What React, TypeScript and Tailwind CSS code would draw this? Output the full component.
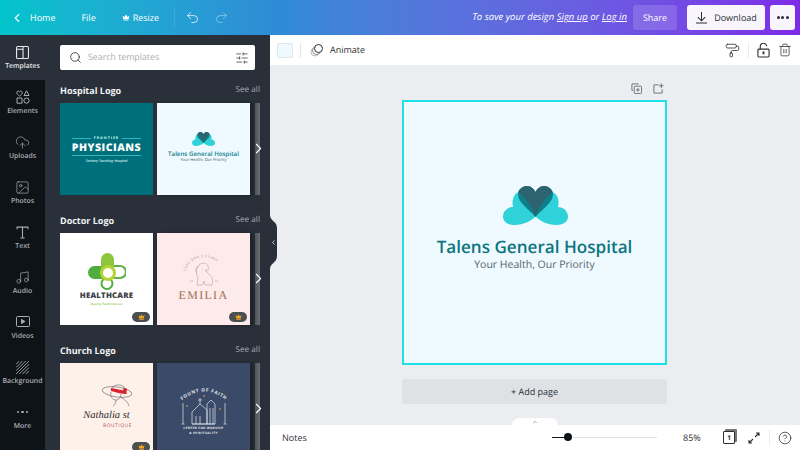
import React from "react";
import { ChevronLeft, ChevronRight, ChevronUp, Search, SlidersHorizontal, Undo2, Redo2, CloudUpload, Image, Music, Trash2, PaintRoller, CircleHelp } from "lucide-react";

const CrownGlyph = ({ className }: { className?: string }) => (
  <svg viewBox="0 0 12 10" className={className} fill="currentColor"><path d="M1 2.2l2.6 2L6 .6l2.4 3.6L11 2.2 10 7.6H2zM2.2 8.3h7.6v1.2H2.2z" /></svg>
);

const HeartLogo = ({ className }: { className?: string }) => (
  <svg viewBox="0 0 65 39" className={className}>
    <path fill="#2fd2d8" d="M32.5 30.5C28 35 20 39 12 39 5 39 0 36 0 30.500C0 25 5 21 10 21 8.500 14 11 6 18 5.500 25 5 32.500 20 32.500 30.500Z" />
    <path fill="#2fd2d8" d="M32.500 30.500C37 35 45 39 53 39 60 39 65 36 65 30.500C65 25 60 21 55 21 57 14 54 6 47 5.500 40 5 32.500 20 32.500 30.500Z" />
    <path fill="#0e7f8a" d="M32.500 31C25 22 15 17 15 8 15 3 20 0 24 0 28 0 31 3 32.500 6 34 3 37 0 41 0 45 0 50 3 50 8 50 17 40 22 32.500 31Z" />
    <path fill="#2e6370" d="M32.500 31C29 20 23 12 15.500 6 17 2 21 0 24 0 28 0 31 3 32.500 6 34 3 37 0 41 0 44 0 48 2 49.500 6 42 12 36 20 32.500 31Z" />
  </svg>
);

const Badge = () => (
  <div className="absolute right-[3px] bottom-[3px] flex h-[10px] w-[18px] items-center justify-center rounded-full bg-[#4b4f52] text-[#f5a623]">
    <CrownGlyph className="h-[6px] w-[7px]" />
  </div>
);

const Physicians = () => (
  <div className="flex h-full flex-col items-center justify-center bg-[#006f7c] pt-[2px] text-white">
    <div className="flex w-[69px] items-center gap-[3px]">
      <div className="h-px flex-1 bg-[#2fb5bd]" />
      <span className="text-[3.500px] font-bold tracking-[1px] text-[#cfe]">FRONTIER</span>
      <div className="h-px flex-1 bg-[#2fb5bd]" />
    </div>
    <div className="text-[10.500px] font-extrabold leading-[13px] tracking-[0.5px]">PHYSICIANS</div>
    <div className="h-px w-[69px] bg-[#2fb5bd]" />
    <div className="mt-[3px] text-[3.500px] font-semibold italic text-[#d5f2f2]">Tertiary Teaching Hospital</div>
  </div>
);

const Talens = () => (
  <div className="flex h-full flex-col items-center bg-[#eefaff] pt-[29px]">
    <HeartLogo className="h-[14px] w-[23px]" />
    <div className="mt-[4px] text-[6.200px] font-semibold leading-[8px] text-[#16808c]">Talens General Hospital</div>
    <div className="text-[4px] leading-[5px] text-[#4a5a60]">Your Health, Our Priority</div>
  </div>
);

const Healthcare = () => (
  <div className="relative flex h-full flex-col items-center bg-white pt-[20px]">
    <svg viewBox="0 0 38 37" className="h-[37px] w-[38px]" fill="none">
      <rect x="13" y="13" width="25" height="12" rx="6" stroke="#5cb247" strokeWidth="2.200" />
      <rect x="0" y="13" width="20" height="13" rx="6.500" fill="#4fae3e" />
      <rect x="13" y="0" width="13" height="22" rx="6.500" fill="#8cc63f" />
      <rect x="13.500" y="25" width="11" height="11" rx="5.500" stroke="#4fae3e" strokeWidth="2" />
      <circle cx="20" cy="20" r="6.500" fill="#fff" stroke="#b5d334" strokeWidth="3" />
    </svg>
    <div className="mt-[1px] text-[7.800px] font-extrabold leading-[10px] tracking-[0.2px] text-[#3a4046]">HEALTHCARE</div>
    <div className="mt-[1px] text-[3px] font-semibold leading-[4px] text-[#8cc63f]">Quality Health Service</div>
    <Badge />
  </div>
);

const Emilia = () => (
  <div className="relative flex h-full flex-col items-center bg-[#fdebeb] pt-[18px]">
    <svg viewBox="0 0 44 38" className="h-[38px] w-[44px]" fill="none" stroke="#b98a7c" strokeWidth="0.5">
      <path id="dogarc" d="M3 25A19 19 0 0 1 41 25" stroke="none" />
      <text fontSize="3.200" fill="#a5796b" stroke="none" letterSpacing="0.600" fontFamily="Open Sans, sans-serif"><textPath href="#dogarc" startOffset="5">CUTE DOG'S CLINIC</textPath></text>
      <path d="M17 14c3-3 8-2 9 1 1 3 0 4-2 5l4 4c3 3 3 6 2 10h-7l-1-4-2 4h-5l1-8c-2-3-3-8 1-12z" />
      <path d="M17 15c-3 1-4 5-2 7M20 18h1M25 19l-2 1" />
      <path d="M8 30h3M33 30h3" />
    </svg>
    <div className="font-['Liberation_Serif',serif] text-[12px] leading-[13px] tracking-[1.300px] text-[#a56f4d]">EMILIA</div>
    <Badge />
  </div>
);

const Nathalie = () => (
  <div className="relative flex h-full flex-col items-center bg-[#fdf1ea] pt-[20px]">
    <svg viewBox="0 0 32 30" className="ml-[20px] h-[30px] w-[32px]" fill="none" stroke="#4a4048" strokeWidth="0.5">
      <ellipse cx="16" cy="9" rx="15" ry="5" transform="rotate(8 16 9)" />
      <path d="M10 7c1-5 9-7 13-3l2 5" />
      <path fill="#d8232f" stroke="none" d="M10 5c5 1 10 2 15 3l1 3c-6 0-11-2-16-3z" />
      <circle cx="24" cy="7" r="2" fill="#d8232f" stroke="none" />
      <path d="M10 9c-1 4 1 8 5 8 3 0 5-3 5-6M15 17c0 3-1 4-3 6M20 14c4 3 7 5 8 9" />
    </svg>
    <div className="ml-[0px] mt-[-4px] font-['Liberation_Serif',serif] text-[10.500px] italic leading-[14px] text-[#2f2c30]">Nathalia st</div>
    <div className="ml-[22px] text-[4.800px] leading-[6px] tracking-[0.6px] text-[#b2505a]">BOUTIQUE</div>
    <Badge />
  </div>
);

const Church = () => (
  <div className="flex h-full flex-col items-center bg-[#3b4a68] pt-[12px] text-[#e8edf2]">
    <svg viewBox="0 0 60 50" className="h-[50px] w-[60px]" fill="none" stroke="#dfe6ee" strokeWidth="0.7">
      <path id="fof" d="M5 28Q30 5 55 28" stroke="none" />
      <text fontSize="4.600" fontWeight="700" fill="#e8edf2" stroke="none" letterSpacing="0.700" fontFamily="Open Sans, sans-serif"><textPath href="#fof" startOffset="4">FOUNT OF FAITH</textPath></text>
      <path d="M9 28v21M7.500 49h3M51 28v21M49.500 49h3" />
      <path d="M26 23v6M24 25h4M18 49V37l8-8 7 6v14zM33 49V29l4-4 4 4v20zM18 49h23" />
      <path d="M22 41v8M26 41v8M36 33v16M39 33v16" />
      <circle cx="13" cy="31" r="0.800" fill="#f5b041" stroke="none" />
      <circle cx="46" cy="34" r="0.800" fill="#f5b041" stroke="none" />
      <circle cx="30" cy="21" r="0.800" fill="#f5b041" stroke="none" />
    </svg>
    <div className="mt-[1px] text-center text-[3px] font-bold leading-[4.500px] tracking-[0.4px]">CENTER FOR WORSHIP<br />&amp; SPIRITUALITY</div>
  </div>
);

const Section = ({ title, left, right }: { title: string; left: React.ReactNode; right: React.ReactNode }) => (
  <section className="mb-[15px]">
    <div className="mb-[3px] flex h-[20px] items-center justify-between pr-[10px] pt-[1px]">
      <span className="text-[9px] font-bold text-[#f1f3f5]">{title}</span>
      <span className="text-[8.200px] font-medium text-[#a6abb2]">See all</span>
    </div>
    <div className="relative flex gap-[4px]">
      <div className="h-[92px] w-[93px] shrink-0 overflow-hidden">{left}</div>
      <div className="h-[92px] w-[93px] shrink-0 overflow-hidden shadow-[4px_0_4px_rgba(0,0,0,0.25)]">{right}</div>
      <div className="ml-[1px] h-[92px] w-[5px] bg-gradient-to-r from-[#4e5357] to-[#6a6e72]" />
      <ChevronRight className="absolute left-[190px] top-[37px] h-[17px] w-[17px] text-white" strokeWidth={1.5} />
    </div>
  </section>
);

const Nav = ({ icon, label, active, first }: { icon: React.ReactNode; label: string; active?: boolean; first?: boolean }) => (
  <div className={`flex h-[45px] flex-col items-center pt-[9px] ${active ? "bg-[#293039] text-[#e7e9eb]" : "bg-[#0e1318] text-[#a9adb1]"} ${first ? "rounded-tr-[8px]" : ""}`}>
    <div className="flex h-[16px] items-center justify-center">{icon}</div>
    <div className="mt-[2px] text-[6.900px] font-semibold leading-[10px]">{label}</div>
  </div>
);

const ic = "h-[15px] w-[15px]";
const nav = { fill: "none", stroke: "currentColor", strokeWidth: 1 } as const;

export default function App() {
  return (
    <div className="flex h-[450px] w-[800px] flex-col overflow-hidden bg-[#ebedf0] font-['Open_Sans','Noto_Sans',sans-serif] [text-rendering:geometricPrecision]">
      <header className="flex h-[35px] shrink-0 items-center bg-gradient-to-r from-[#00c4cc] via-[#2f8ad6] via-35% to-[#7d2ae8] pl-[10px] pr-[5px] text-white">
        <ChevronLeft className="h-[14px] w-[14px]" strokeWidth={2} />
        <span className="ml-[6px] text-[9px] font-medium">Home</span>
        <span className="ml-[26px] text-[9px] font-medium">File</span>
        <CrownGlyph className="ml-[26px] h-[7px] w-[8px]" />
        <span className="ml-[3px] text-[9px] font-medium">Resize</span>
        <div className="ml-[15px] h-[20px] w-px bg-white/10" />
        <Undo2 className="ml-[10px] h-[15px] w-[15px]" strokeWidth={1.2} />
        <Redo2 className="ml-[14px] h-[15px] w-[15px] opacity-50" strokeWidth={1.2} />
        <div className="ml-auto text-[9.500px] font-medium italic">To save your design <span className="underline">Sign up</span> or <span className="underline">Log in</span></div>
        <div className="ml-[6px] flex h-[25px] w-[44px] items-center justify-center rounded-[3px] bg-white/15 text-[9px] font-medium">Share</div>
        <div className="ml-[10px] flex h-[25px] w-[78px] items-center justify-center gap-[6px] rounded-[3px] bg-[#f8f6fc] text-[9px] font-medium text-[#2b2f35]">
          <svg viewBox="0 0 14 14" className="h-[13px] w-[13px]" fill="none" stroke="currentColor" strokeWidth="1.100"><path d="M7 1v9M3 6.500L7 10.500 11 6.500M1 13h12" /></svg>Download
        </div>
        <div className="ml-[5px] flex h-[25px] w-[25px] items-center justify-center gap-[1.500px] rounded-[3px] bg-[#f8f6fc]">
          <span className="h-[3px] w-[3px] rounded-full bg-[#2b2f35]" /><span className="h-[3px] w-[3px] rounded-full bg-[#2b2f35]" /><span className="h-[3px] w-[3px] rounded-full bg-[#2b2f35]" />
        </div>
      </header>
      <div className="flex min-h-0 flex-1">
        <nav className="w-[45px] shrink-0 bg-[#0e1318]">
          <Nav active label="Templates" icon={<svg viewBox="0 0 12 12" className="h-[13px] w-[13px]" {...nav}><rect x=".5" y=".5" width="11" height="11" rx="1" /><path d="M6.500.5v11M.5 3h6" /></svg>} />
          <Nav first label="Elements" icon={<svg viewBox="0 0 14 14" className="h-[14px] w-[14px]" {...nav}><path d="M3.500 6C2 5 .8 4 .8 2.600.8 1.200 2.600.4 3.500 1.800 4.400.4 6.200 1.200 6.200 2.600 6.200 4 5 5 3.500 6zM10.500.8L13 5.500H8zM1 8h5v5.200H1z" /><circle cx="10.500" cy="10.600" r="2.600" /></svg>} />
          <Nav label="Uploads" icon={<CloudUpload className={ic} strokeWidth={1.1} />} />
          <Nav label="Photos" icon={<Image className={ic} strokeWidth={1.1} />} />
          <Nav label="Text" icon={<svg viewBox="0 0 12 12" className="h-[13px] w-[13px]" {...nav}><path d="M1 3V1h10v2M6 1v10M4 11h4" /></svg>} />
          <Nav label="Audio" icon={<Music className={ic} strokeWidth={1.1} />} />
          <Nav label="Videos" icon={<svg viewBox="0 0 14 12" className="h-[12px] w-[14px]" {...nav}><rect x=".5" y=".5" width="13" height="10" rx="1" /><path d="M5.500 3.500l3.500 2-3.500 2z" fill="currentColor" /></svg>} />
          <Nav label="Background" icon={
            <svg viewBox="0 0 12 12" className="h-[13px] w-[13px]" stroke="currentColor" strokeWidth="0.8"><path d="M0 3L3 0M0 6L6 0M0 9L9 0M0 12L12 0M3 12L12 3M6 12L12 6M9 12L12 9" /></svg>
          } />
          <Nav label="More" icon={
            <div className="flex gap-[2px]"><span className="h-[2.500px] w-[2.500px] rounded-full bg-current" /><span className="h-[2.500px] w-[2.500px] rounded-full bg-current" /><span className="h-[2.500px] w-[2.500px] rounded-full bg-current" /></div>
          } />
        </nav>
        <aside className="relative w-[225px] shrink-0 bg-[#293039] pl-[15px] pt-[10px]">
          <div className="flex h-[25px] w-[195px] items-center rounded-[2px] bg-white pl-[9px] pr-[6px]">
            <Search className="h-[13px] w-[13px] text-[#2b2f35]" strokeWidth={1.5} />
            <span className="ml-[6px] text-[8.800px] text-[#a9adb3]">Search templates</span>
            <SlidersHorizontal className="ml-auto h-[14px] w-[14px] text-[#2b2f35]" strokeWidth={1.2} />
          </div>
          <div className="mt-[10px] h-[370px] overflow-hidden">
            <Section title="Hospital Logo" left={<Physicians />} right={<Talens />} />
            <Section title="Doctor Logo" left={<Healthcare />} right={<Emilia />} />
            <Section title="Church Logo" left={<Nathalie />} right={<Church />} />
          </div>
          <div className="absolute left-[225px] top-[180px] z-10 flex h-[54px] w-[7px] items-center justify-center">
            <svg viewBox="0 0 7 54" className="absolute inset-0 h-[54px] w-[7px]"><path fill="#293039" d="M0 0C0 6 7 6 7 13V41C7 48 0 48 0 54Z" /></svg>
            <ChevronLeft className="relative h-[7px] w-[7px] text-white" strokeWidth={2.5} />
          </div>
        </aside>
        <main className="flex min-w-0 flex-1 flex-col">
          <div className="flex h-[30px] shrink-0 items-center bg-white pl-[7px] pr-[8px] text-[#2b2f35]">
            <div className="h-[15px] w-[16px] rounded-[2px] border border-[#dfe8ec] bg-[#eefaff]" />
            <div className="ml-[7px] h-[15px] w-px bg-[#e3e5e8]" />
            <svg viewBox="0 0 14 14" className="ml-[9px] h-[14px] w-[14px]" fill="none" stroke="#2b2f35" strokeWidth="1"><circle cx="5" cy="9" r="4" stroke="#b4b7bb" /><circle cx="6.500" cy="7.500" r="4" stroke="#888" fill="#fff" /><circle cx="8.500" cy="5.500" r="4" fill="#fff" /></svg>
            <span className="ml-[6px] text-[9px] font-medium">Animate</span>
            <PaintRoller className="ml-auto h-[15px] w-[15px]" strokeWidth={1.3} />
            <div className="ml-[8px] h-[15px] w-px bg-[#e8eaed]" />
            <svg viewBox="0 0 14 16" className="ml-[8px] h-[15px] w-[13px]" fill="none" stroke="currentColor" strokeWidth="1.200"><rect x="1" y="6.500" width="12" height="8.500" rx="1" /><path d="M3.500 6.500V4a3.500 3.500 0 0 1 7-.5" /><path d="M7 9v3" strokeWidth="2" /></svg>
            <Trash2 className="ml-[8px] h-[14px] w-[14px]" strokeWidth={1.3} />
          </div>
          <div className="relative flex min-h-0 flex-1 flex-col items-center">
            <div className="mr-[1px] flex h-[35px] w-[265px] shrink-0 items-center justify-end gap-[11px] pr-[3px] pt-[12px] text-[#5a6068]">
              <svg viewBox="0 0 12 12" className="h-[11px] w-[11px]" fill="none" stroke="currentColor" strokeWidth="0.900"><path d="M8 1.500V1H1v7h1" /><rect x="3.500" y="3.500" width="8" height="8" rx="1" /><path d="M7.500 5.500v4M5.500 7.500h4" /></svg>
              <svg viewBox="0 0 12 12" className="h-[11px] w-[11px]" fill="none" stroke="currentColor" strokeWidth="0.900"><path d="M6 2H1v9h9V7M9 .5v5M6.500 3h5" /></svg>
            </div>
            <div className="mr-[1px] flex h-[265px] w-[265px] shrink-0 flex-col items-center border-2 border-[#1fe0e6] bg-[#eefaff] pt-[84px]">
              <HeartLogo className="ml-[1px] h-[39px] w-[65px]" />
              <div className="mt-[11px] text-[17.100px] font-semibold leading-[24px] text-[#0e7480]">Talens General Hospital</div>
              <div className="mt-[-1px] text-[10.500px] leading-[12px] text-[#55636a]">Your Health, Our Priority</div>
            </div>
            <div className="mr-[1px] mt-[14px] flex h-[25px] w-[265px] shrink-0 items-center justify-center rounded-[3px] bg-[#dfe1e5] text-[9px] font-medium text-[#2b2f35]">+ Add page</div>
            <div className="absolute bottom-0 left-1/2 flex h-[7px] w-[46px] -translate-x-1/2 items-center justify-center rounded-t-[8px] bg-white">
              <ChevronUp className="h-[6px] w-[6px] text-[#8a8f96]" strokeWidth={3} />
            </div>
          </div>
          <footer className="flex h-[25px] shrink-0 items-center bg-white pl-[12px] pr-[8px] text-[#2b2f35]">
            <span className="w-[270px] shrink-0 text-[9px] font-medium">Notes</span>
            <div className="relative h-px w-[105px] shrink-0 bg-[#dfe1e5]">
              <div className="absolute left-0 top-[-0.500px] h-[1.500px] w-[14px] bg-[#14181c]" />
              <div className="absolute left-[12px] top-[-4px] h-[8px] w-[8px] rounded-full bg-[#0e1318]" />
            </div>
            <span className="ml-[26px] w-[18px] shrink-0 text-[9px]">85%</span>
            <div className="relative ml-[22px] flex h-[13px] w-[12px] shrink-0 items-center justify-center rounded-[1px] border border-[#2b2f35] bg-white text-[6.500px] font-bold shadow-[2px_-2px_0_#777]">1</div>
            <svg viewBox="0 0 12 12" className="ml-[13px] h-[12px] w-[12px] shrink-0" fill="none" stroke="currentColor" strokeWidth="1.100"><path d="M7 5l4-4M8 1h3v3M5 7l-4 4M1 8v3h3" /></svg>
            <div className="ml-[9px] h-[15px] w-px shrink-0 bg-[#e8eaed]" />
            <CircleHelp className="ml-[8px] h-[14px] w-[14px] shrink-0" strokeWidth={1.3} />
          </footer>
        </main>
      </div>
    </div>
  );
}
